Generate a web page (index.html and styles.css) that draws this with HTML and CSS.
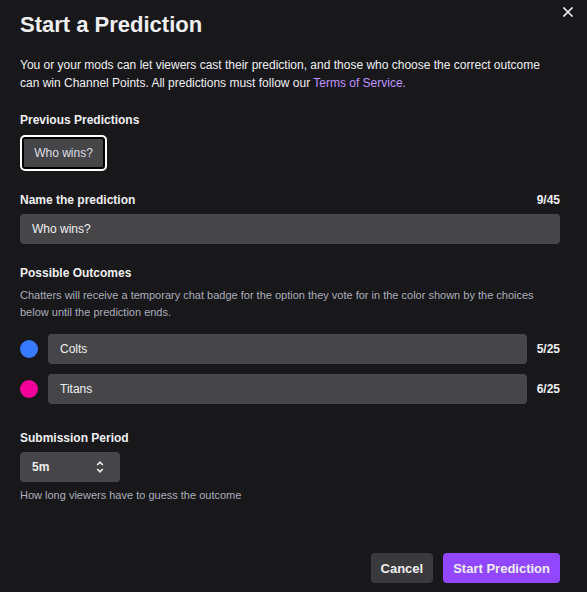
FILE: index.html
```html
<!DOCTYPE html>
<html lang="en">
<head>
<meta charset="utf-8">
<title>Start a Prediction</title>
<link rel="stylesheet" href="styles.css">
</head>
<body>
<div class="modal">
  <header class="head">
    <h1 class="title">Start a Prediction</h1>
    <button class="close" aria-label="Close">
      <svg width="10" height="10" viewBox="0 0 10 10"><path d="M1 1 L9 9 M9 1 L1 9" stroke="#efeff1" stroke-width="1.6" stroke-linecap="square"/></svg>
    </button>
  </header>
  <p class="intro">You or your mods can let viewers cast their prediction, and those who choose the correct outcome can win Channel Points. All predictions must follow our <a class="link" href="#">Terms of Service.</a></p>

  <section class="sec sec-prev">
    <div class="label">Previous Predictions</div>
    <button class="prev-btn">Who wins?</button>
  </section>

  <section class="sec sec-name">
    <div class="label-row"><span class="label">Name the prediction</span><span class="count">9/45</span></div>
    <div class="input">Who wins?</div>
  </section>

  <section class="sec sec-outcomes">
    <div class="label">Possible Outcomes</div>
    <p class="hint">Chatters will receive a temporary chat badge for the option they vote for in the color shown by the choices below until the prediction ends.</p>
    <div class="outcomes">
      <div class="outcome"><span class="dot dot-blue"></span><div class="input grow">Colts</div><span class="count">5/25</span></div>
      <div class="outcome"><span class="dot dot-pink"></span><div class="input grow">Titans</div><span class="count">6/25</span></div>
    </div>
  </section>

  <section class="sec sec-period">
    <div class="label">Submission Period</div>
    <div class="select"><span>5m</span>
      <svg width="8" height="14" viewBox="0 0 8 14"><path d="M1.2 5 L4 2.2 L6.8 5 M1.2 9 L4 11.8 L6.8 9" fill="none" stroke="#efeff1" stroke-width="1.6"/></svg>
    </div>
    <p class="hint hint-period">How long viewers have to guess the outcome</p>
  </section>

  <footer class="foot">
    <button class="btn btn-cancel">Cancel</button>
    <button class="btn btn-primary">Start Prediction</button>
  </footer>
</div>
</body>
</html>
```

FILE: styles.css
```css
* { box-sizing: border-box; }
html, body { margin: 0; padding: 0; }
body {
  background: #18181b;
  color: #efeff1;
  font-family: "Liberation Sans", Arial, sans-serif;
}
.modal {
  min-height: 592px;
  display: flex;
  flex-direction: column;
  padding: 11px 27px 9px 20px;
}
.head {
  display: flex;
  justify-content: space-between;
  align-items: flex-start;
}
.title {
  margin: 0;
  font-size: 22px;
  line-height: 28px;
  font-weight: 700;
}
.close {
  width: 20px;
  height: 20px;
  margin: -9px -18px 0 0;
  padding: 0;
  border: 0;
  background: transparent;
  display: flex;
  align-items: center;
  justify-content: center;
}
.intro {
  margin: 17px 0 0;
  font-size: 12px;
  line-height: 18px;
}
.link { color: #bf94ff; text-decoration: none; }
.label {
  font-size: 12px;
  font-weight: 700;
  line-height: 18px;
}
.label-row {
  display: flex;
  justify-content: space-between;
  align-items: center;
}
.count {
  font-size: 12px;
  font-weight: 700;
  line-height: 18px;
}
.sec-prev { margin-top: 19px; }
.prev-btn {
  margin-top: 6px;
  width: 87px;
  height: 36px;
  background: #464649;
  border: 2px solid #ffffff;
  border-radius: 5px;
  box-shadow: inset 0 0 0 2px #000;
  color: #dedee3;
  font-family: inherit;
  font-size: 12px;
  padding: 0;
}
.sec-name { margin-top: 20px; }
.input {
  margin-top: 5px;
  height: 30px;
  background: #464649;
  border-radius: 4px;
  padding: 0 12px;
  display: flex;
  align-items: center;
  font-size: 12px;
  color: #efeff1;
}
.sec-outcomes { margin-top: 20px; }
.hint {
  margin: 5px 0 0;
  font-size: 11px;
  line-height: 16.8px;
  color: #adadb8;
}
.outcomes {
  margin-top: 13px;
  display: flex;
  flex-direction: column;
  gap: 10px;
}
.outcome {
  display: flex;
  align-items: center;
  gap: 10px;
}
.outcome .input { margin-top: 0; }
.grow { flex: 1; }
.dot {
  width: 18px;
  height: 18px;
  border-radius: 50%;
  flex: none;
}
.dot-blue { background: #387aff; }
.dot-pink { background: #f5009b; }
.sec-period { margin-top: 25px; }
.select {
  margin-top: 5px;
  width: 100px;
  height: 30px;
  background: #464649;
  border-radius: 4px;
  padding: 0 16px 0 12px;
  display: flex;
  align-items: center;
  justify-content: space-between;
  font-size: 12px;
  font-weight: 700;
}
.hint-period { margin-top: 5px; }
.foot {
  margin-top: auto;
  display: flex;
  justify-content: flex-end;
  gap: 10px;
}
.btn {
  height: 30px;
  padding: 0 10px;
  border: 0;
  border-radius: 4px;
  font-family: inherit;
  font-size: 13px;
  font-weight: 700;
  color: #efeff1;
}
.btn-cancel { background: #3a3a3d; }
.btn-primary { background: #9147ff; }
```
